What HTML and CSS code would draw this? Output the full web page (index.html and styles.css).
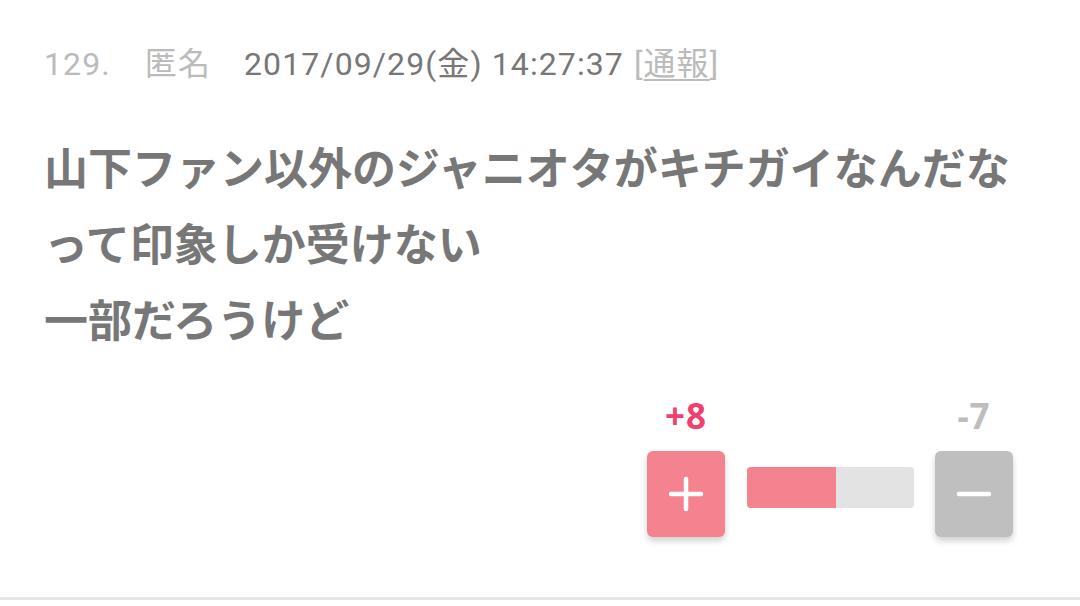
FILE: index.html
```html
<!DOCTYPE html>
<html lang="ja">
<head>
<meta charset="utf-8">
<link rel="stylesheet" href="styles.css">
</head>
<body>
<div class="comment">
  <div class="meta">
    <span class="num">129.</span>
    <span class="name">匿名</span>
    <span class="date">2017/09/29(金) 14:27:37</span>
    <span class="report">[<span class="report-link">通報</span>]</span>
  </div>
  <div class="body">山下ファン以外のジャニオタがキチガイなんだなって印象しか受けない<br>一部だろうけど</div>
  <div class="votes">
    <div class="vote">
      <div class="count plus-count">+8</div>
      <div class="btn plus-btn">
        <svg width="38" height="38" viewBox="0 0 38 38"><path d="M19 4V34M4 19H34" stroke="#fff" stroke-width="4.5" stroke-linecap="round" fill="none"/></svg>
      </div>
    </div>
    <div class="bar"><div class="bar-fill" style="width:53.3%"></div></div>
    <div class="vote">
      <div class="count minus-count">-7</div>
      <div class="btn minus-btn">
        <svg width="38" height="38" viewBox="0 0 38 38"><path d="M4 19H34" stroke="#fff" stroke-width="4.5" stroke-linecap="round" fill="none"/></svg>
      </div>
    </div>
  </div>
</div>
</body>
</html>
```
FILE: styles.css
```css
html, body {
  margin: 0;
  padding: 0;
  background: #fff;
}
.comment {
  width: 1080px;
  height: 600px;
  box-sizing: border-box;
  padding: 40px 44px 0 44px;
  border-bottom: 3px solid #e6e6e6;
}
.meta {
  font-family: Roboto, "Noto Sans CJK JP", sans-serif;
  font-size: 32px;
  letter-spacing: 1.1px;
  line-height: 48px;
  color: #bbbbbb;
  display: flex;
  align-items: baseline;
  white-space: nowrap;
}
.num { margin-right: 34px; }
.name { margin-right: 33px; }
.date { color: #777777; margin-right: 10px; }
.report-link { text-decoration: underline; text-decoration-thickness: 2px; text-underline-offset: 4px; }
.body {
  margin-top: 40px;
  font-family: "Noto Sans CJK JP", sans-serif;
  font-weight: 700;
  font-size: 44px;
  line-height: 76px;
  color: #777777;
}
.votes {
  display: flex;
  justify-content: flex-end;
  align-items: flex-end;
  margin-top: 40px;
  margin-right: 23px;
}
.vote {
  display: flex;
  flex-direction: column;
  align-items: center;
}
.count {
  font-family: "Noto Sans", Roboto, sans-serif;
  font-weight: 700;
  font-size: 35px;
  letter-spacing: 1px;
  line-height: 40px;
  margin-bottom: 15px;
}
.plus-count { color: #f23f6d; }
.minus-count { color: #bdbdbd; }
.btn {
  width: 78px;
  height: 86px;
  border-radius: 6px;
  display: flex;
  align-items: center;
  justify-content: center;
  box-shadow: 0 4px 6px rgba(0,0,0,0.18);
}
.plus-btn { background: #f5838f; }
.minus-btn { background: #bfbfbf; }
.bar {
  width: 167px;
  height: 41px;
  margin: 0 21px 29px 22px;
  background: #e3e3e3;
  border-radius: 4px;
  overflow: hidden;
  display: flex;
}
.bar-fill {
  background: #f5838f;
  height: 100%;
}
```
